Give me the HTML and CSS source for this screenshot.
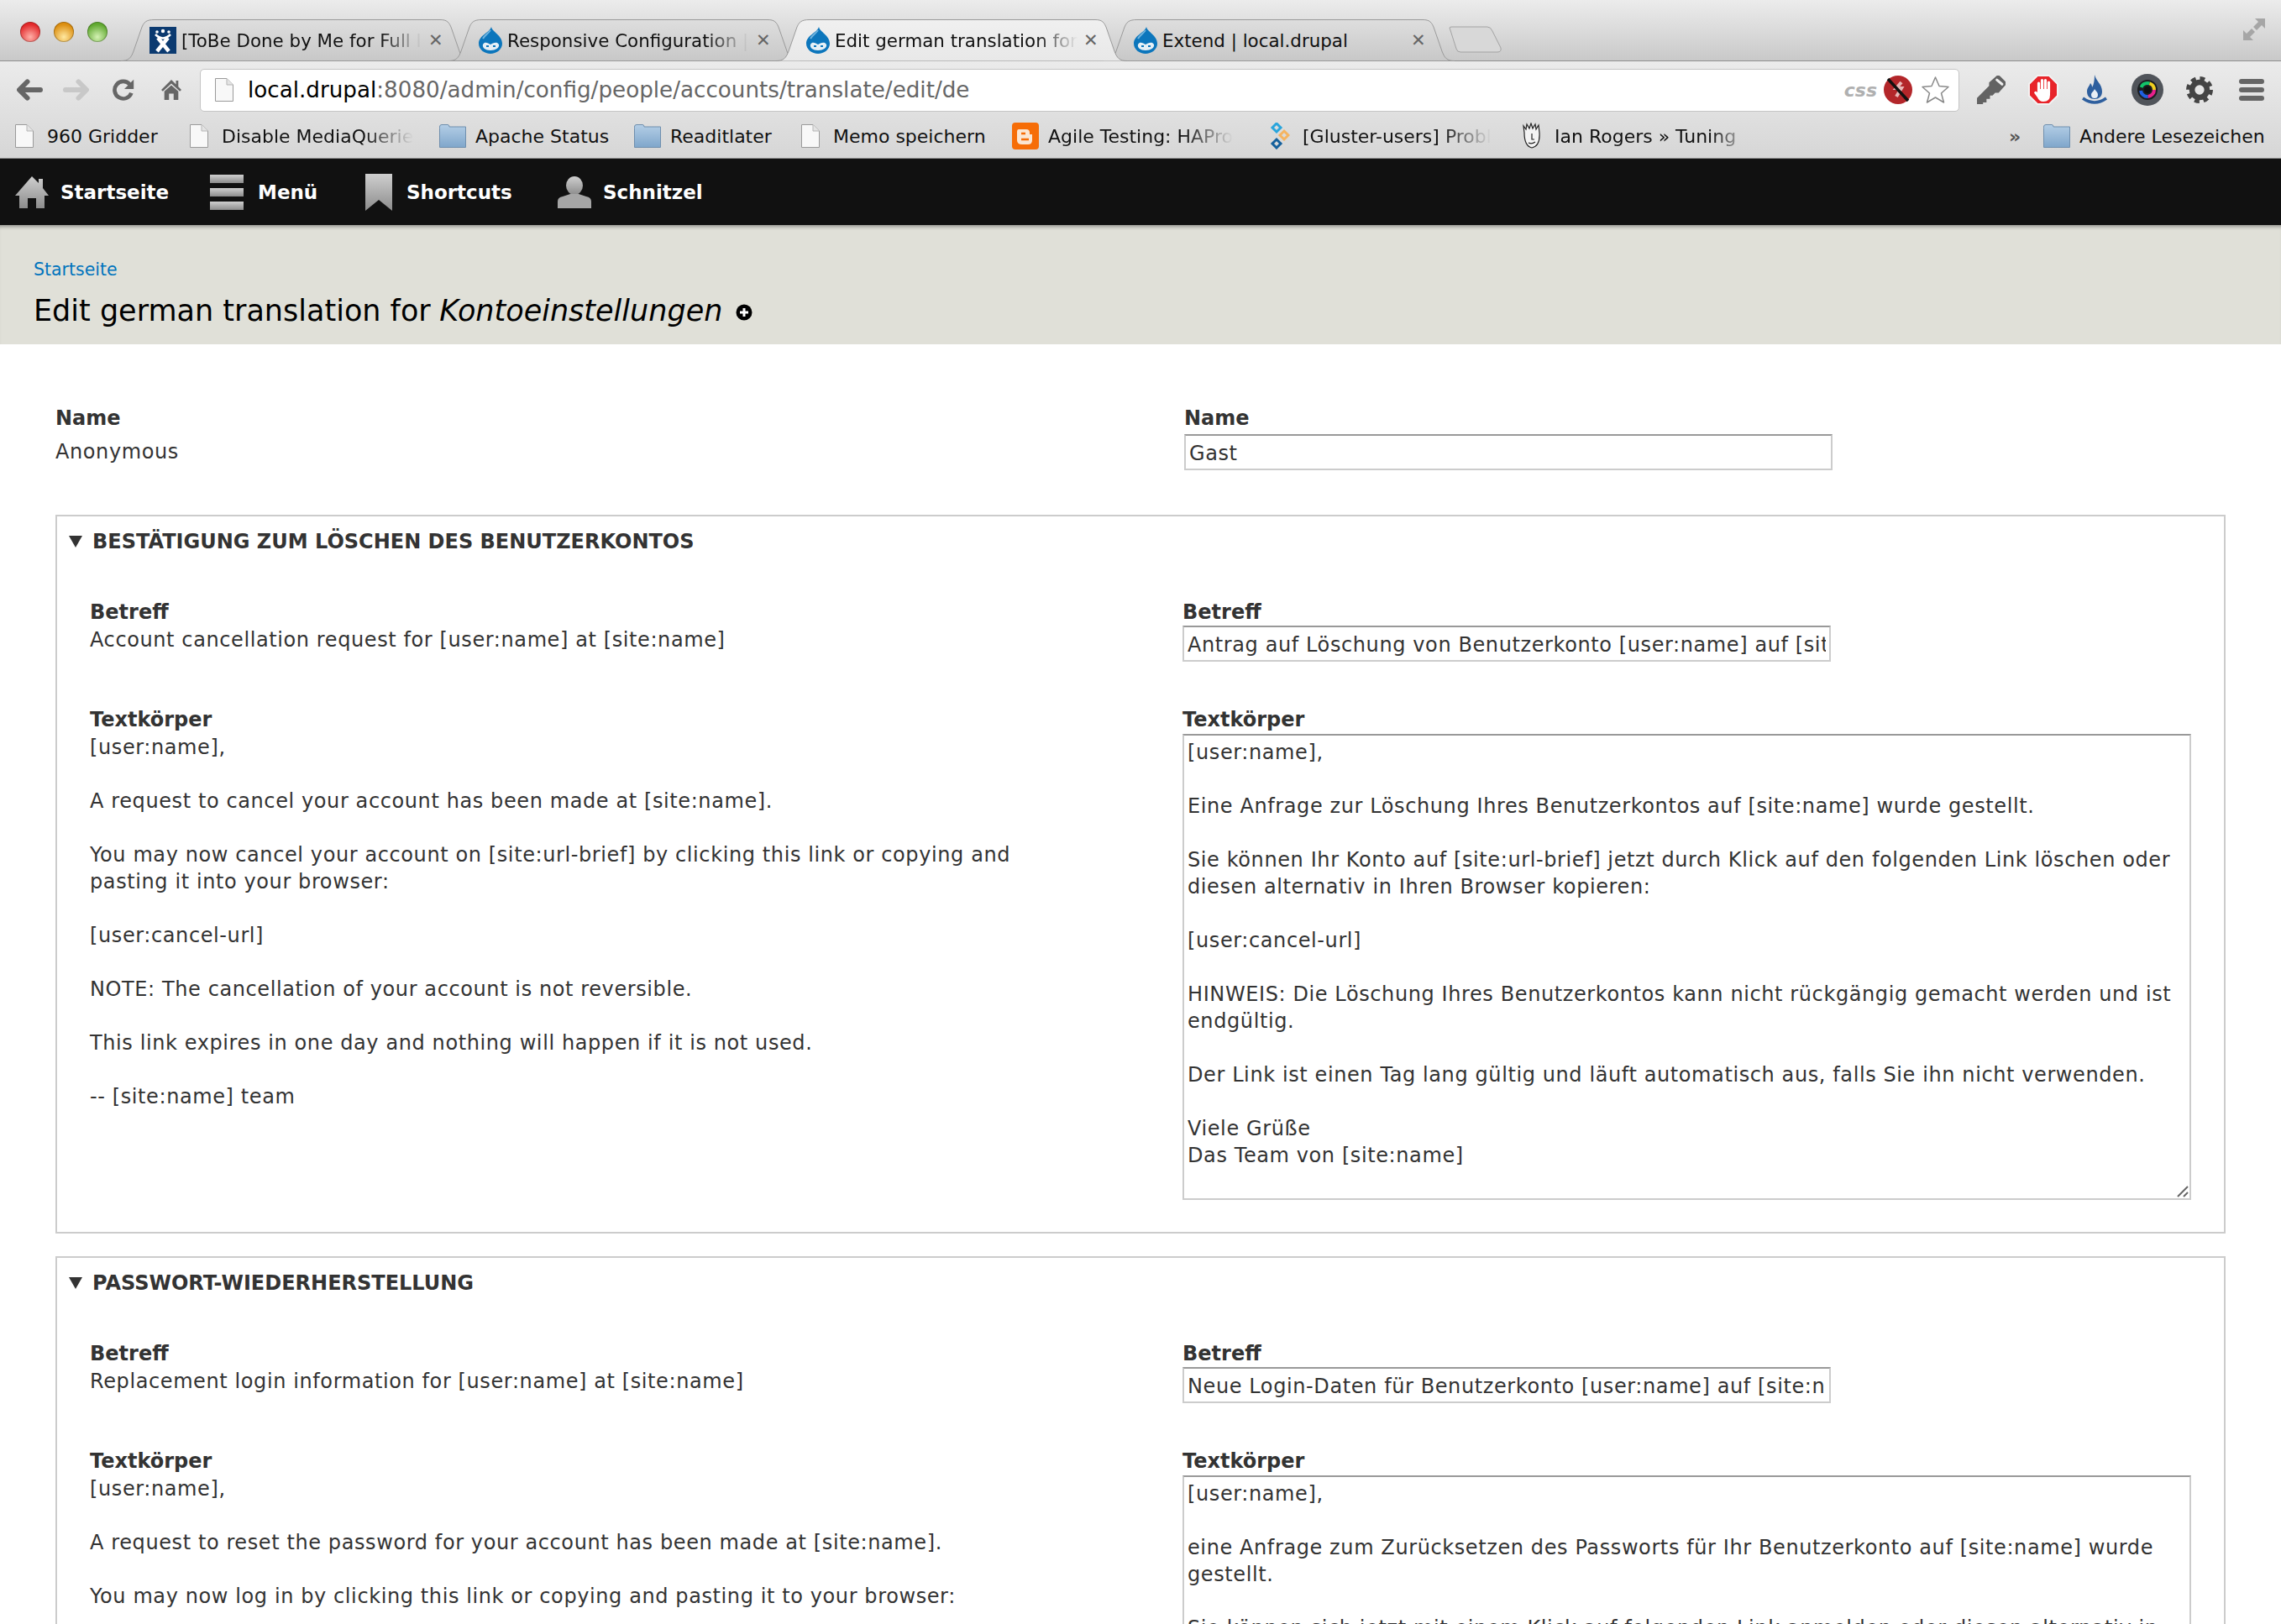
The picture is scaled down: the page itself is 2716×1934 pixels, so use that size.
FILE: index.html
```html
<!DOCTYPE html>
<html lang="de">
<head>
    <meta charset="UTF-8">
    <title>Edit german translation for Kontoeinstellungen</title>
    <link rel="stylesheet" href="styles.css">
</head>
<body>
    <svg class="defs" width="0" height="0">
        <defs>
            <linearGradient id="adminGray" x1="0" y1="0" x2="0" y2="1">
                <stop offset="0" stop-color="#cfcfcf"/>
                <stop offset="1" stop-color="#8c8c8c"/>
            </linearGradient>
            <linearGradient id="folderBlue" x1="0" y1="0" x2="0" y2="1">
                <stop offset="0" stop-color="#b4cee6"/>
                <stop offset="1" stop-color="#7fa6cb"/>
            </linearGradient>
            <linearGradient id="tabIdle" x1="0" y1="0" x2="0" y2="1">
                <stop offset="0" stop-color="#dedede"/>
                <stop offset="1" stop-color="#c8c8c8"/>
            </linearGradient>
            <linearGradient id="tabActive" x1="0" y1="0" x2="0" y2="1">
                <stop offset="0" stop-color="#f0f0f0"/>
                <stop offset="1" stop-color="#e8e8e8"/>
            </linearGradient>
        </defs>
        <symbol id="page" viewBox="0 0 22 28">
            <path d="M.5.5H14L21.5 8V27.5H.5Z" fill="#f8f8f8" stroke="#9a9a9a"/>
            <path d="M14 .5V8H21.5" fill="#e4e4e4" stroke="#b5b5b5"/>
        </symbol>
        <symbol id="folder" viewBox="0 0 32 28">
            <path d="M.5 4.5V3Q.5 .5 3 .5H10Q12 .5 12 3H31.5V27.5H.5Z" fill="url(#folderBlue)" stroke="#6f8fae"/>
        </symbol>
        <symbol id="drupal" viewBox="0 0 28 32">
            <path d="M15 0C16 6 28 10 28 20C28 27 21 32 14 32C7 32 0 27 0 20C0 10 13 7 15 0Z" fill="#0c76bc"/>
            <path d="M5 21C7 17 11 19 14 21C17 19 22 17 24 21C25 25 20 28 14 28C8 28 4 25 5 21Z" fill="#e6f0f6"/>
            <path d="M9 22h3v2H9zM17 22h3v2h-3z" fill="#0c76bc"/>
            <path d="M14 4C11 8 7 10 5 14" stroke="#6fb3de" stroke-width="2" fill="none"/>
        </symbol>
    </svg>

    <div class="tabstrip">
        <div class="lights">
            <span class="light light-red"></span>
            <span class="light light-amber"></span>
            <span class="light light-green"></span>
        </div>
        <div class="tabs">
            <div class="tab">
                <svg class="tab-shape" viewBox="0 0 418 50"><path d="M0 49.5C9 49.5 12 46 15 38L24 12C27 3 30 .5 40 .5H380C388 .5 391 3 394 12L403 38C406 46 409 49.5 418 49.5Z" fill="url(#tabIdle)" stroke="#9a9a9a"/></svg>
                <svg class="favicon" viewBox="0 0 32 32">
                    <rect width="32" height="32" fill="#0b3a70"/>
                    <path d="M10 13L23 29M22 13L9 29" stroke="#fff" stroke-width="4.5"/>
                    <path d="M7 9Q16 18 25 9" stroke="#fff" stroke-width="2.5" fill="none"/>
                    <circle cx="16" cy="5" r="2.2" fill="#fff"/><circle cx="9" cy="6" r="1.8" fill="#fff"/><circle cx="23" cy="6" r="1.8" fill="#fff"/>
                </svg>
                <span class="tab-title">[ToBe Done by Me for Full I</span>
                <span class="tab-close">✕</span>
            </div>
            <div class="tab">
                <svg class="tab-shape" viewBox="0 0 418 50"><path d="M0 49.5C9 49.5 12 46 15 38L24 12C27 3 30 .5 40 .5H380C388 .5 391 3 394 12L403 38C406 46 409 49.5 418 49.5Z" fill="url(#tabIdle)" stroke="#9a9a9a"/></svg>
                <svg class="favicon favicon-drop"><use href="#drupal"/></svg>
                <span class="tab-title">Responsive Configuration |</span>
                <span class="tab-close">✕</span>
            </div>
            <div class="tab tab-active">
                <svg class="tab-shape" viewBox="0 0 418 50"><path d="M0 49.5C9 49.5 12 46 15 38L24 12C27 3 30 .5 40 .5H380C388 .5 391 3 394 12L403 38C406 46 409 49.5 418 49.5" fill="url(#tabActive)" stroke="#9a9a9a"/></svg>
                <svg class="favicon favicon-drop"><use href="#drupal"/></svg>
                <span class="tab-title">Edit german translation for</span>
                <span class="tab-close">✕</span>
            </div>
            <div class="tab">
                <svg class="tab-shape" viewBox="0 0 418 50"><path d="M0 49.5C9 49.5 12 46 15 38L24 12C27 3 30 .5 40 .5H380C388 .5 391 3 394 12L403 38C406 46 409 49.5 418 49.5Z" fill="url(#tabIdle)" stroke="#9a9a9a"/></svg>
                <svg class="favicon favicon-drop"><use href="#drupal"/></svg>
                <span class="tab-title tab-title-full">Extend | local.drupal</span>
                <span class="tab-close">✕</span>
            </div>
        </div>
        <svg class="newtab" viewBox="0 0 64 32"><path d="M1 2Q1 1 4 1H46Q50 1 52 6L62 26Q63 31 58 31H14Q10 31 9 27Z" fill="#d8d8d8" stroke="#a2a2a2"/></svg>
        <svg class="fullscreen" viewBox="0 0 28 28">
            <path d="M27 1H15L19 5L13 11L17 15L23 9L27 13ZM1 27V15L5 19L11 13L15 17L9 23L13 27Z" fill="#a6a6a6"/>
        </svg>
    </div>

    <div class="toolbar">
        <div class="nav-icons">
            <svg class="nav-icon nav-back" viewBox="0 0 32 28"><path d="M13 4L3 14L13 24M4 14H29" fill="none" stroke="#666" stroke-width="6" stroke-linecap="round" stroke-linejoin="round"/></svg>
            <svg class="nav-icon nav-forward" viewBox="0 0 32 28"><path d="M19 4L29 14L19 24M28 14H3" fill="none" stroke="#c8c8c8" stroke-width="6" stroke-linecap="round" stroke-linejoin="round"/></svg>
            <svg class="nav-icon nav-reload" viewBox="0 0 30 28"><path d="M22 7A11 11 0 1 0 24 18" fill="none" stroke="#666" stroke-width="5"/><path d="M27 1V13H15Z" fill="#666"/></svg>
            <svg class="nav-icon nav-home" viewBox="0 0 26 28"><path d="M0 14L13 1L19 7V2H22V10L26 14L24 16L13 6L2 16ZM4 16L13 8L22 16V27H16V19H10V27H4Z" fill="#666"/></svg>
        </div>
        <div class="omnibox">
            <svg class="omni-page"><use href="#page"/></svg>
            <span class="url"><span class="url-host">local.drupal</span>:8080/admin/config/people/accounts/translate/edit/de</span>
            <span class="css-badge">css</span>
            <svg class="omni-block" viewBox="0 0 34 34">
                <circle cx="17" cy="17" r="17" fill="#b3262a"/>
                <path d="M21 8L15 15H21L15 25" fill="none" stroke="#e9b7b7" stroke-width="4"/>
                <path d="M5 4L29 30" stroke="#111" stroke-width="3.5"/>
            </svg>
            <svg class="omni-star" viewBox="0 0 34 34"><path d="M17 2L21.5 12.5L32.5 13.5L24 21L27 32L17 26L7 32L10 21L1.5 13.5L12.5 12.5Z" fill="#fff" stroke="#8a8a8a" stroke-width="1.5" stroke-linejoin="round"/></svg>
        </div>
        <div class="ext-icons">
            <svg class="ext-key" viewBox="0 0 33 33">
                <path d="M0 33V26L14 12V8L23 0Q25 -1 27 1L33 7Q34 9 33 11L25 20H21L18 23H15V27H11V31H7V33Z" fill="#636363"/>
                <path d="M23 5L29 10" stroke="#eee" stroke-width="3" stroke-linecap="round"/>
            </svg>
            <svg class="ext-stop" viewBox="0 0 36 36">
                <path d="M11 1H25L35 11V25L25 35H11L1 25V11Z" fill="#e8242a" stroke="#f2f2f2" stroke-width="2"/>
                <path d="M12.5 21V10M16.5 20V6.5M20.5 20V6.5M24.5 21V9" stroke="#fff" stroke-width="3.2" stroke-linecap="round"/>
                <path d="M11 17H26V24Q26 32 18 32Q13 32 11 27L7 21.5Q8 18.5 11 21Z" fill="#fff"/>
            </svg>
            <svg class="ext-flame" viewBox="0 0 30 36">
                <path d="M15 0C17 8 24 11 24 20C24 26 20 29 15 29C10 29 6 26 6 20C6 15 9 14 10 10C12 12 12 14 12 15C14 12 15 7 15 0Z" fill="#2e5f9e"/>
                <path d="M15 17C17 20 19 21 19 24C19 27 17 28 15 28C13 28 11 27 11 24C11 21 14 20 15 17Z" fill="#e8eef5"/>
                <path d="M1 28Q15 38 29 28" fill="none" stroke="#2e5f9e" stroke-width="3.5"/>
            </svg>
            <svg class="ext-camera" viewBox="0 0 38 38">
                <circle cx="19" cy="19" r="19" fill="#50545a"/>
                <circle cx="19" cy="19" r="12" fill="#1c1e22"/>
                <circle cx="19" cy="19" r="8" fill="none" stroke="#12c46a" stroke-width="4" stroke-dasharray="12 40" stroke-dashoffset="24"/>
                <circle cx="19" cy="19" r="8" fill="none" stroke="#f0d020" stroke-width="4" stroke-dasharray="12 40" stroke-dashoffset="12"/>
                <circle cx="19" cy="19" r="8" fill="none" stroke="#e8208c" stroke-width="4" stroke-dasharray="12 40" stroke-dashoffset="0"/>
                <circle cx="19" cy="19" r="8" fill="none" stroke="#2060e0" stroke-width="4" stroke-dasharray="12 40" stroke-dashoffset="-12"/>
                <circle cx="19" cy="19" r="4" fill="#111"/>
            </svg>
            <svg class="ext-gear" viewBox="0 0 34 34">
                <circle cx="17" cy="17" r="9.5" fill="none" stroke="#444" stroke-width="7"/>
                <circle cx="17" cy="17" r="14" fill="none" stroke="#444" stroke-width="6" stroke-dasharray="6 5"/>
            </svg>
            <svg class="ext-menu" viewBox="0 0 30 26">
                <rect width="30" height="6" rx="3" fill="#666"/><rect y="10" width="30" height="6" rx="3" fill="#666"/><rect y="20" width="30" height="6" rx="3" fill="#666"/>
            </svg>
        </div>
    </div>

    <div class="bookmarks">
        <div class="bm bm-1"><svg class="bm-page"><use href="#page"/></svg><span>960 Gridder</span></div>
        <div class="bm bm-2"><svg class="bm-page"><use href="#page"/></svg><span class="bm-fade">Disable MediaQuerie</span></div>
        <div class="bm bm-3"><svg class="bm-folder"><use href="#folder"/></svg><span>Apache Status</span></div>
        <div class="bm bm-4"><svg class="bm-folder"><use href="#folder"/></svg><span>Readitlater</span></div>
        <div class="bm bm-5"><svg class="bm-page"><use href="#page"/></svg><span>Memo speichern</span></div>
        <div class="bm bm-6">
            <svg class="bm-folder" viewBox="0 0 32 32">
                <rect width="32" height="32" rx="4" fill="#f66d07"/>
                <path d="M8 8H17Q21 8 21 12V14H24V21Q24 26 19 26H12Q6 26 6 21V11Q6 8 8 8Z" fill="#fbe6d2"/>
                <path d="M11 13H16M11 20H20" stroke="#f66d07" stroke-width="2.5"/>
            </svg>
            <span class="bm-fade">Agile Testing: HAPro</span>
        </div>
        <div class="bm bm-7">
            <svg class="bm-small" viewBox="0 0 24 32">
                <path d="M8 1L13 6L8 11L3 6Z" fill="none" stroke="#29a5dc" stroke-width="3"/>
                <path d="M17 10L22 15L17 20L12 15Z" fill="none" stroke="#f5b460" stroke-width="3"/>
                <path d="M8 20L13 25L8 30L3 25Z" fill="none" stroke="#14609c" stroke-width="3"/>
            </svg>
            <span class="bm-fade">[Gluster-users] Probl</span>
        </div>
        <div class="bm bm-8">
            <svg class="bm-small" viewBox="0 0 24 32">
                <path d="M3 12L2 4L5 8L6 2L9 7L11 1L13 7L16 2L17 8L20 3L21 12Q22 28 12 30Q3 28 3 12Z" fill="#f4f4f4" stroke="#222" stroke-width="1.2"/>
                <path d="M12 13V20H15M8 24Q12 26 16 23" fill="none" stroke="#222" stroke-width="1.2"/>
            </svg>
            <span class="bm-fade bm-short">Ian Rogers » Tuning</span>
        </div>
        <span class="bm-more">»</span>
        <div class="bm"><svg class="bm-folder"><use href="#folder"/></svg><span>Andere Lesezeichen</span></div>
    </div>

    <div class="adminbar">
        <a class="admin-item">
            <svg class="admin-icon" viewBox="0 0 40 38"><path d="M0 23L20 0L28 8V3H33V14L40 23H35V38H25V26H15V38H5V23Z" fill="url(#adminGray)"/></svg>
            Startseite
        </a>
        <a class="admin-item admin-menu">
            <svg class="admin-icon" viewBox="0 0 40 42"><rect width="40" height="10" fill="url(#adminGray)"/><rect y="16" width="40" height="10" fill="url(#adminGray)"/><rect y="32" width="40" height="10" fill="url(#adminGray)"/></svg>
            Menü
        </a>
        <a class="admin-item admin-shortcuts">
            <svg class="admin-icon" viewBox="0 0 32 44"><path d="M0 0H32V44L16 31L0 44Z" fill="url(#adminGray)"/></svg>
            Shortcuts
        </a>
        <a class="admin-item">
            <svg class="admin-icon" viewBox="0 0 40 38"><ellipse cx="20" cy="11" rx="10" ry="11" fill="url(#adminGray)"/><path d="M0 38V30Q0 25 6 24L15 21H25L34 24Q40 25 40 30V38Z" fill="#a6a6a6"/></svg>
            Schnitzel
        </a>
    </div>

    <div class="pagehead">
        <a class="crumb">Startseite</a>
        <h1 class="title">Edit german translation for <em>Kontoeinstellungen</em>
            <svg class="title-plus" viewBox="0 0 20 20"><circle cx="10" cy="10" r="9.5" fill="#000"/><path d="M5 10H15M10 5V15" stroke="#fff" stroke-width="3"/></svg>
        </h1>
    </div>

    <div class="main">
        <div class="name-row">
            <div>
                <div class="label">Name</div>
                <div class="name-value">Anonymous</div>
            </div>
            <div>
                <div class="label">Name</div>
                <input class="field field-name" type="text" value="Gast">
            </div>
        </div>

        <div class="box">
            <div class="legend"><span class="arrow"></span>BESTÄTIGUNG ZUM LÖSCHEN DES BENUTZERKONTOS</div>
            <div class="pair">
                <div>
                    <div class="label">Betreff</div>
                    <div class="source">Account cancellation request for [user:name] at [site:name]</div>
                </div>
                <div>
                    <div class="label">Betreff</div>
                    <input class="field" type="text" value="Antrag auf Löschung von Benutzerkonto [user:name] auf [site:name]">
                </div>
                <div>
                    <div class="label">Textkörper</div>
                    <div class="source">[user:name],

A request to cancel your account has been made at [site:name].

You may now cancel your account on [site:url-brief] by clicking this link or copying and
pasting it into your browser:

[user:cancel-url]

NOTE: The cancellation of your account is not reversible.

This link expires in one day and nothing will happen if it is not used.

-- [site:name] team</div>
                </div>
                <div>
                    <div class="label">Textkörper</div>
                    <div class="area-wrap">
                        <textarea class="area" wrap="off">[user:name],

Eine Anfrage zur Löschung Ihres Benutzerkontos auf [site:name] wurde gestellt.

Sie können Ihr Konto auf [site:url-brief] jetzt durch Klick auf den folgenden Link löschen oder
diesen alternativ in Ihren Browser kopieren:

[user:cancel-url]

HINWEIS: Die Löschung Ihres Benutzerkontos kann nicht rückgängig gemacht werden und ist
endgültig.

Der Link ist einen Tag lang gültig und läuft automatisch aus, falls Sie ihn nicht verwenden.

Viele Grüße
Das Team von [site:name]</textarea>
                        <svg class="grip" viewBox="0 0 14 14"><path d="M1 13L13 1M8 13L13 8" stroke="#666" stroke-width="2"/></svg>
                    </div>
                </div>
            </div>
        </div>

        <div class="box">
            <div class="legend"><span class="arrow"></span>PASSWORT-WIEDERHERSTELLUNG</div>
            <div class="pair">
                <div>
                    <div class="label">Betreff</div>
                    <div class="source">Replacement login information for [user:name] at [site:name]</div>
                </div>
                <div>
                    <div class="label">Betreff</div>
                    <input class="field" type="text" value="Neue Login-Daten für Benutzerkonto [user:name] auf [site:name]">
                </div>
                <div>
                    <div class="label">Textkörper</div>
                    <div class="source">[user:name],

A request to reset the password for your account has been made at [site:name].

You may now log in by clicking this link or copying and pasting it to your browser:</div>
                </div>
                <div>
                    <div class="label">Textkörper</div>
                    <div class="area-wrap">
                        <textarea class="area" wrap="off">[user:name],

eine Anfrage zum Zurücksetzen des Passworts für Ihr Benutzerkonto auf [site:name] wurde
gestellt.

Sie können sich jetzt mit einem Klick auf folgenden Link anmelden oder diesen alternativ in</textarea>
                    </div>
                </div>
            </div>
        </div>
    </div>
</body>
</html>
```

FILE: styles.css
```css
html, body {
    margin: 0;
    height: 1934px;
    overflow: hidden;
    background: #fff;
}
body {
    font-family: "DejaVu Sans", sans-serif;
    font-size: 24px;
    letter-spacing: 0.6px;
    color: #333;
}
.defs {
    position: absolute;
}

/* browser chrome */
.tabstrip {
    height: 72px;
    display: flex;
    align-items: flex-end;
    background: linear-gradient(#ececec, #c9c9c9);
    border-bottom: 1px solid #8f8f8f;
    padding-left: 24px;
    letter-spacing: 0;
}
.lights {
    display: flex;
    gap: 16px;
    align-self: flex-start;
    margin-top: 26px;
    width: 120px;
}
.light {
    width: 24px;
    height: 24px;
    border-radius: 50%;
    box-shadow: inset 0 0 0 1px rgba(0, 0, 0, 0.25);
}
.light-red { background: radial-gradient(circle at 50% 75%, #ffb0a8, #e2292b 70%); }
.light-amber { background: radial-gradient(circle at 50% 75%, #ffe8a0, #dc8e10 70%); }
.light-green { background: radial-gradient(circle at 50% 75%, #d4f2b4, #60a830 70%); }

.tabs {
    display: flex;
    height: 49px;
}
.tab {
    position: relative;
    width: 418px;
    height: 50px;
    margin-right: -28px;
    display: flex;
    align-items: center;
    padding-left: 34px;
    box-sizing: border-box;
    font-size: 21.4px;
    color: #111;
}
.tab + .tab { padding-left: 36px; }
.tab-active { z-index: 2; }
.tab-shape {
    position: absolute;
    left: 0;
    top: 0;
    width: 418px;
    height: 50px;
}
.favicon {
    position: relative;
    width: 32px;
    height: 32px;
    margin-top: -1px;
    flex: none;
}
.favicon-drop { width: 28px; }
.tab-title {
    position: relative;
    margin-left: 6px;
    white-space: nowrap;
    -webkit-mask-image: linear-gradient(to right, #000 calc(100% - 50px), transparent);
    mask-image: linear-gradient(to right, #000 calc(100% - 50px), transparent);
}
.tab-title-full {
    -webkit-mask-image: none;
    mask-image: none;
}
.tab-close {
    position: absolute;
    left: 366px;
    top: 11px;
    font-size: 21px;
    line-height: 28px;
    font-weight: bold;
    color: #666;
}
.newtab {
    width: 64px;
    height: 32px;
    margin: 0 0 9px 21px;
    flex: none;
}
.fullscreen {
    width: 28px;
    height: 28px;
    margin-left: auto;
    margin-right: 18px;
    align-self: flex-start;
    margin-top: 21px;
}

.toolbar {
    height: 60px;
    box-sizing: border-box;
    padding-top: 8px;
    display: flex;
    align-items: center;
    background: linear-gradient(#ebebeb, #e0e0e0);
}
.nav-icons {
    display: flex;
    align-items: center;
    width: 238px;
    padding-left: 20px;
    box-sizing: border-box;
}
.nav-icon {
    height: 28px;
    flex: none;
}
.nav-back { width: 31px; margin-right: 24px; }
.nav-forward { width: 31px; margin-right: 28px; }
.nav-reload { width: 28px; margin-right: 30px; }
.nav-home { width: 24px; }
.omnibox {
    width: 2095px;
    height: 51px;
    box-sizing: border-box;
    display: flex;
    align-items: center;
    background: #fff;
    border: 1px solid #c4c4c4;
    border-radius: 5px;
    padding-left: 17px;
}
.omni-page {
    width: 22px;
    height: 28px;
    flex: none;
}
.url {
    margin-left: 17px;
    font-size: 26.2px;
    letter-spacing: 0;
    color: #666;
    white-space: nowrap;
}
.url-host { color: #000; }
.css-badge {
    margin-left: auto;
    font-size: 22px;
    font-weight: bold;
    font-style: italic;
    letter-spacing: 0;
    color: #b0b0b0;
}
.omni-block {
    width: 34px;
    height: 34px;
    margin-left: 8px;
}
.omni-star {
    width: 35px;
    height: 34px;
    margin: 0 10px;
}
.ext-icons {
    display: flex;
    align-items: center;
    padding-left: 21px;
}
.ext-icons svg { flex: none; }
.ext-key { width: 34px; height: 34px; margin-right: 27px; }
.ext-stop { width: 36px; height: 36px; margin-right: 28px; }
.ext-flame { width: 30px; height: 36px; margin-right: 29px; }
.ext-camera { width: 38px; height: 38px; margin-right: 27px; }
.ext-gear { width: 32px; height: 32px; margin-right: 31px; }
.ext-menu { width: 30px; height: 26px; }

.bookmarks {
    height: 55px;
    box-sizing: content-box;
    display: flex;
    align-items: center;
    background: linear-gradient(#e0e0e0, #d6d6d6);
    border-bottom: 1px solid #8f8f8f;
    font-size: 22px;
    letter-spacing: 0;
    color: #111;
    padding-left: 18px;
    white-space: nowrap;
}
.bm {
    display: flex;
    align-items: center;
    flex: none;
    margin-top: 3px;
}
.bm-page { width: 22px; height: 28px; margin-right: 16px; flex: none; }
.bm-folder { width: 32px; height: 28px; margin-right: 11px; flex: none; }
.bm-6 .bm-folder { height: 32px; }
.bm-small { width: 24px; height: 32px; margin-right: 15px; flex: none; }
.bm-fade {
    -webkit-mask-image: linear-gradient(to right, #000 calc(100% - 60px), transparent);
    mask-image: linear-gradient(to right, #000 calc(100% - 60px), transparent);
}
.bm-short {
    -webkit-mask-image: linear-gradient(to right, #000 calc(100% - 30px), rgba(0, 0, 0, 0.35));
    mask-image: linear-gradient(to right, #000 calc(100% - 30px), rgba(0, 0, 0, 0.35));
}
.bm-1 { width: 208px; }
.bm-2 { width: 297px; }
.bm-3 { width: 232px; }
.bm-4 { width: 199px; }
.bm-5 { width: 251px; }
.bm-6 { width: 307px; }
.bm-7 { width: 300px; }
.bm-8 { width: 580px; }
.bm-more {
    width: 41px;
    margin-top: 3px;
    color: #555;
    font-weight: bold;
}

/* admin toolbar */
.adminbar {
    height: 79px;
    background: #111;
    display: flex;
    align-items: center;
    padding-left: 18px;
    font-size: 23px;
    letter-spacing: 0;
    font-weight: bold;
    color: #fff;
}
.admin-item {
    display: flex;
    align-items: center;
    gap: 14px;
    width: 232px;
    flex: none;
}
.admin-icon {
    width: 40px;
    height: 38px;
}
.admin-menu {
    width: 185px;
    gap: 17px;
}
.admin-menu .admin-icon { height: 42px; }
.admin-shortcuts {
    width: 229px;
    gap: 17px;
}
.admin-shortcuts .admin-icon { width: 32px; height: 44px; }

.pagehead {
    height: 142px;
    box-sizing: border-box;
    background: #e0e0d8;
    padding: 37px 0 0 40px;
    box-shadow: inset 0 5px 4px -3px rgba(0, 0, 0, 0.35);
    letter-spacing: 0;
}
.crumb {
    display: block;
    font-size: 20.5px;
    line-height: 32px;
    color: #0074bd;
}
.title {
    margin: 13px 0 0 0;
    font-size: 35px;
    font-weight: normal;
    line-height: 40px;
    color: #000;
    display: flex;
    align-items: center;
}
.title em { margin-left: 0.3em; }
.title-plus {
    width: 20px;
    height: 20px;
    margin-left: 16px;
    margin-top: 3px;
}

/* translation form */
.main {
    padding: 72px 66px 0;
}
.label {
    font-weight: bold;
    letter-spacing: 0;
    line-height: 32px;
}
.name-row {
    display: grid;
    grid-template-columns: 1344px 1fr;
    height: 78px;
    margin-bottom: 53px;
}
.name-value {
    line-height: 32px;
    margin-top: 8px;
}
.field {
    display: block;
    width: 772px;
    height: 43px;
    box-sizing: border-box;
    border: 2px solid #ccc;
    border-top-color: #999;
    padding: 2px 4px 0;
    font-family: inherit;
    font-size: 24px;
    letter-spacing: 0.6px;
    color: #333;
    background: #fff;
    outline: none;
}
.field-name {
    margin-top: 3px;
}
.box {
    border: 2px solid #ccc;
    padding: 14px 0 38px 39px;
    margin-bottom: 27px;
}
.legend {
    display: flex;
    align-items: center;
    margin-left: -25px;
    font-weight: bold;
    letter-spacing: 0;
    line-height: 32px;
}
.arrow {
    width: 0;
    height: 0;
    border-left: 8px solid transparent;
    border-right: 8px solid transparent;
    border-top: 14px solid #333;
    margin-right: 12px;
}
.pair {
    display: grid;
    grid-template-columns: 1301px 1fr;
    row-gap: 53px;
    margin-top: 52px;
}
.source {
    margin-top: 1px;
    line-height: 32px;
    white-space: pre-wrap;
}
.area-wrap {
    position: relative;
    width: 1201px;
    margin-top: 1px;
}
.area {
    display: block;
    width: 1201px;
    height: 555px;
    box-sizing: border-box;
    border: 2px solid #ccc;
    border-top-color: #999;
    padding: 4px;
    font-family: inherit;
    font-size: 24px;
    letter-spacing: 0.6px;
    line-height: 32px;
    color: #333;
    overflow: hidden;
    resize: none;
    outline: none;
}
.grip {
    position: absolute;
    right: 3px;
    bottom: 3px;
    width: 14px;
    height: 14px;
}
```
